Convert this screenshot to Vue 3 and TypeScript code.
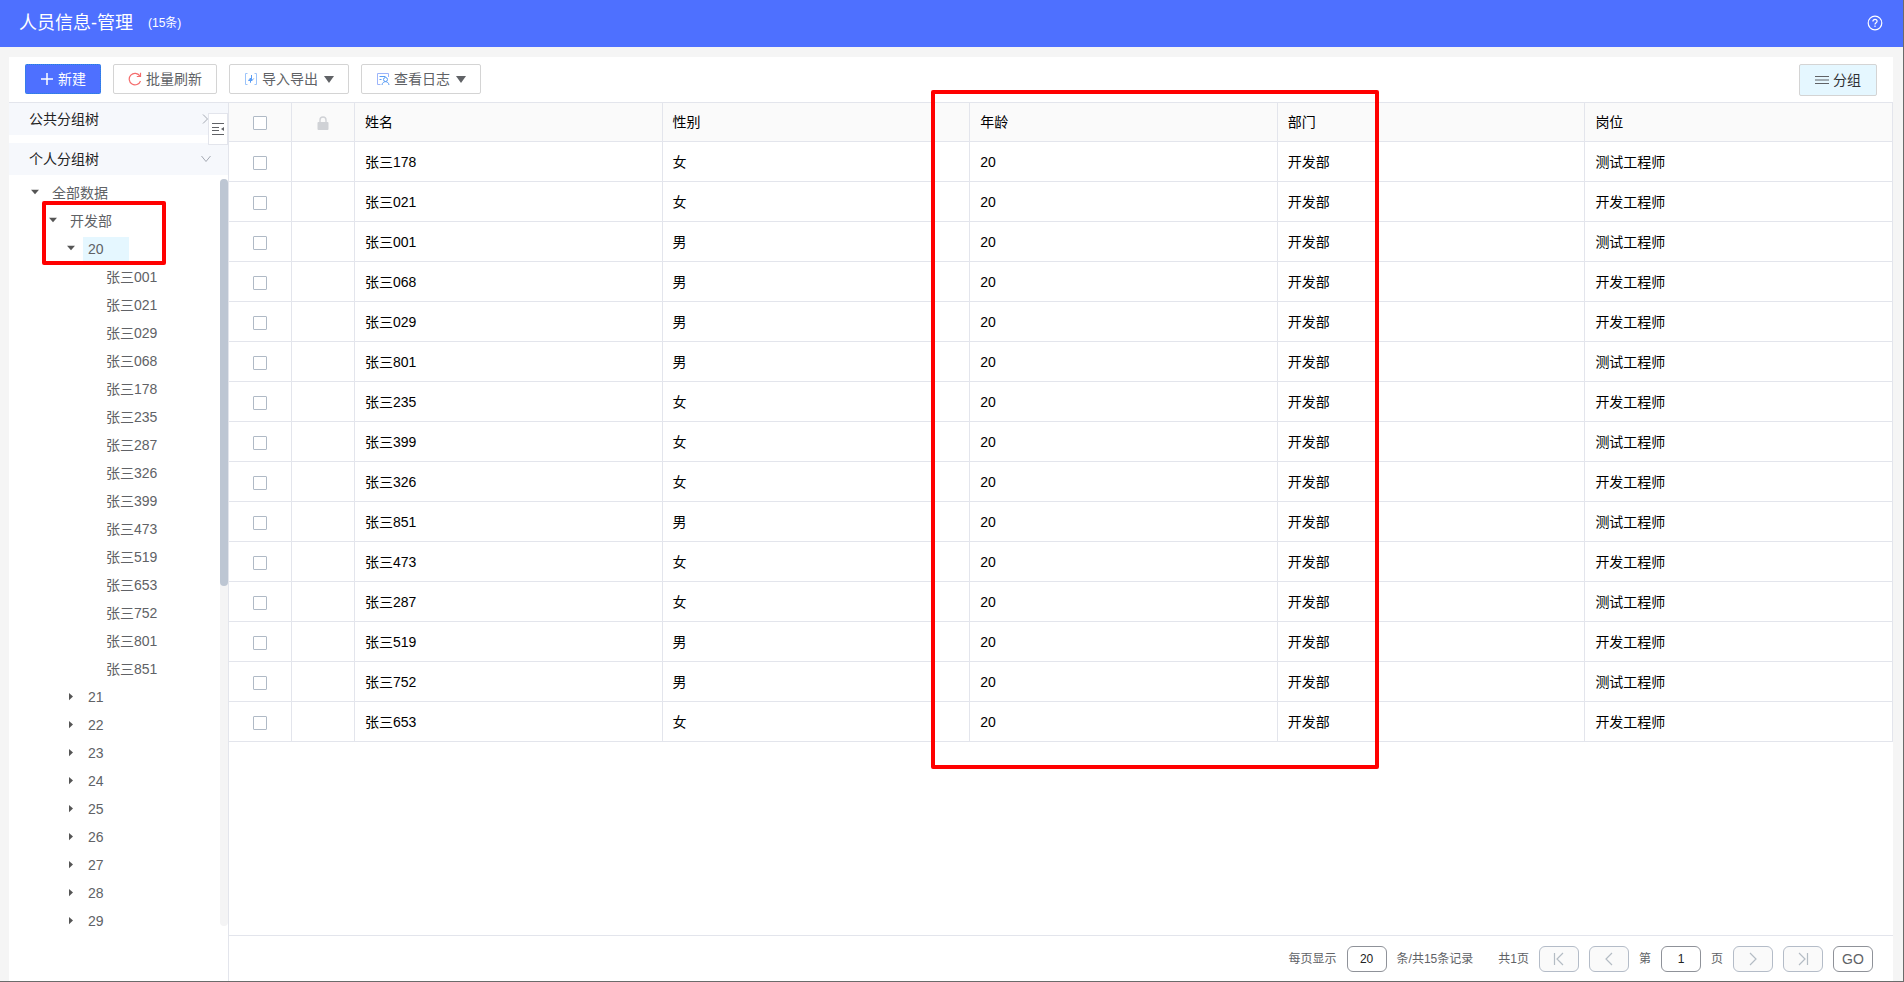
<script setup lang="ts">
import { ref } from 'vue'

interface Person {
  name: string
  gender: string
  age: number
  dept: string
  post: string
}

const TESTER = '测试工程师'
const DEVELOPER = '开发工程师'

const source: [string, string, string][] = [
  ['178', '女', TESTER],
  ['021', '女', DEVELOPER],
  ['001', '男', TESTER],
  ['068', '男', DEVELOPER],
  ['029', '男', DEVELOPER],
  ['801', '男', TESTER],
  ['235', '女', DEVELOPER],
  ['399', '女', TESTER],
  ['326', '女', DEVELOPER],
  ['851', '男', TESTER],
  ['473', '女', DEVELOPER],
  ['287', '女', TESTER],
  ['519', '男', DEVELOPER],
  ['752', '男', TESTER],
  ['653', '女', DEVELOPER],
]

const people: Person[] = source.map(([no, gender, post]) => ({
  name: `张三${no}`,
  gender,
  age: 20,
  dept: '开发部',
  post,
}))

const members = people.map((p) => p.name).sort()
const ages = [21, 22, 23, 24, 25, 26, 27, 28, 29]
const columns = ['姓名', '性别', '年龄', '部门', '岗位']

const selected = ref<string[]>([])
const pageSize = ref('20')
const pageNo = ref('1')

function toggleAll(e: Event) {
  selected.value = (e.target as HTMLInputElement).checked ? [...members] : []
}
</script>

<template>
  <div class="page">
    <header class="topbar">
      <h1>人员信息-管理</h1>
      <span class="count">(15条)</span>
      <button class="help" type="button" aria-label="帮助">
        <svg width="16" height="16" viewBox="0 0 16 16" fill="none" stroke="#fff" stroke-width="1.2">
          <circle cx="8" cy="8" r="6.8" />
          <path d="M5.9 6.4c0-1.3.9-2.1 2.1-2.1s2.1.8 2.1 1.9c0 1.5-2.100 1.500-2.100 3.200" />
          <path d="M8 10.500v1.400" />
        </svg>
      </button>
    </header>

    <main class="panel">
      <div class="toolbar">
        <button class="btn primary" type="button">
          <svg width="14" height="14" viewBox="0 0 14 14" stroke="#fff" stroke-width="1.5"><path d="M7 1v12M1 7h12" /></svg>
          新建
        </button>
        <button class="btn" type="button">
          <svg width="14" height="14" viewBox="0 0 14 14" fill="none" stroke="#f56c6c" stroke-width="1.2">
            <path d="M12.500 9A5.800 5.800 0 1 1 11.800 3.800" />
            <path d="M12.500 .8v3.700H8.800" />
          </svg>
          批量刷新
        </button>
        <button class="btn" type="button">
          <svg width="14" height="14" viewBox="0 0 14 14" fill="none" stroke="#5a9df5">
            <path d="M3.500 1.500h-2v11h2M10.500 1.500h2v11h-2" stroke="#9cc4fa" />
            <path d="M6.500 10.500V6L4.500 8.500h2v2zM7.500 3v6l2.200-2.500" />
          </svg>
          导入导出
          <span class="caret"></span>
        </button>
        <button class="btn" type="button">
          <svg width="14" height="14" viewBox="0 0 14 14" fill="none" stroke="#5a9df5">
            <path d="M4.500 12.500h-3v-11h11V5" stroke="#9cb4fa" />
            <path d="M3.500 4.500h6M3.500 7.500h2" />
            <circle cx="9.500" cy="7.500" r="2" />
            <path d="M6 13c.3-2.200 1.700-3.300 3.500-3.300s3.200 1.100 3.500 3.300" />
          </svg>
          查看日志
          <span class="caret"></span>
        </button>
        <button class="btn group" type="button">
          <svg width="14" height="10" viewBox="0 0 14 10" stroke="#606266" stroke-width="1.2"><path d="M0 1.500h14M0 5h14M0 8.500h14" /></svg>
          分组
        </button>
      </div>

      <div class="content">
        <aside class="sidebar">
          <button class="section" type="button">
            公共分组树
            <svg width="10" height="10" viewBox="0 0 10 10" fill="none" stroke="#a4a9b2"><path d="M2 .5L6.500 5 2 9.500" /></svg>
          </button>
          <button class="section" type="button">
            个人分组树
            <svg width="10" height="10" viewBox="0 0 10 10" fill="none" stroke="#a4a9b2"><path d="M.5 2L5 7.500 9.500 2" /></svg>
          </button>
          <button class="collapse" type="button" aria-label="收起">
            <svg width="13" height="14" viewBox="0 0 13 14" stroke="#606266" fill="#606266">
              <path d="M0 1.500h12M0 5.500h7M0 8.500h7M0 12.500h12" />
              <path d="M12 5v4L9 7z" stroke="none" />
            </svg>
          </button>

          <div class="tree-box">
            <ul class="tree">
              <li class="l1"><i class="tri down"></i><span>全部数据</span></li>
              <li class="l2"><i class="tri down"></i><span>开发部</span></li>
              <li class="l3"><i class="tri down"></i><span class="active">20</span></li>
              <li v-for="m in members" :key="m" class="l4"><i class="tri"></i><span>{{ m }}</span></li>
              <li v-for="a in ages" :key="a" class="l3"><i class="tri right"></i><span>{{ a }}</span></li>
            </ul>
            <div class="scroll"><div class="thumb"></div></div>
          </div>
          <div class="mark mark-tree"></div>
        </aside>

        <section class="main">
          <table>
            <colgroup>
              <col class="narrow" /><col class="narrow" />
              <col v-for="c in columns" :key="c" />
            </colgroup>
            <thead>
              <tr>
                <th class="mid">
                  <input type="checkbox" aria-label="全选" :checked="selected.length === people.length" @change="toggleAll" />
                </th>
                <th class="mid">
                  <svg width="12" height="14" viewBox="0 0 12 14" fill="none">
                    <path d="M3 7V4a3 3 0 0 1 6 0v3" stroke="#d0d2d6" stroke-width="1.4" />
                    <rect x=".5" y="6" width="11" height="8" rx="1" fill="#d0d2d6" />
                  </svg>
                </th>
                <th v-for="c in columns" :key="c">{{ c }}</th>
              </tr>
            </thead>
            <tbody>
              <tr v-for="p in people" :key="p.name">
                <td class="mid"><input v-model="selected" type="checkbox" :value="p.name" :aria-label="p.name" /></td>
                <td></td>
                <td>{{ p.name }}</td>
                <td>{{ p.gender }}</td>
                <td>{{ p.age }}</td>
                <td>{{ p.dept }}</td>
                <td>{{ p.post }}</td>
              </tr>
            </tbody>
          </table>
          <div class="mark mark-cols"></div>

          <footer class="pager">
            <label for="size">每页显示</label>
            <input id="size" v-model="pageSize" type="text" />
            <span class="total">条/共15条记录</span>
            <span>共1页</span>
            <button type="button" disabled aria-label="首页">
              <svg width="12" height="14" viewBox="0 0 12 14"><path d="M1.500 1v12M10 1L4 7l6 6" /></svg>
            </button>
            <button type="button" disabled aria-label="上一页">
              <svg width="12" height="14" viewBox="0 0 12 14"><path d="M9 1L3 7l6 6" /></svg>
            </button>
            <label for="no">第</label>
            <input id="no" v-model="pageNo" type="text" />
            <span>页</span>
            <button type="button" disabled aria-label="下一页">
              <svg width="12" height="14" viewBox="0 0 12 14"><path d="M3 1l6 6-6 6" /></svg>
            </button>
            <button type="button" disabled aria-label="末页">
              <svg width="12" height="14" viewBox="0 0 12 14"><path d="M2 1l6 6-6 6M10.500 1v12" /></svg>
            </button>
            <button class="go" type="button">GO</button>
          </footer>
        </section>
      </div>
    </main>
  </div>
</template>

<style>
body {
  margin: 0;
}
</style>

<style scoped>
* {
  box-sizing: border-box;
}
.page {
  display: flex;
  flex-direction: column;
  min-height: 100vh;
  background: #f5f5f5;
  border-right: 1px solid #6b6b6b;
  border-bottom: 1px solid #6b6b6b;
  font: 14px/20px "Liberation Sans", "Noto Sans CJK SC", sans-serif;
  color: #606266;
}
button,
input {
  font: inherit;
  color: inherit;
}
button {
  padding: 0;
  cursor: pointer;
}
svg {
  flex: none;
}
.topbar {
  display: flex;
  align-items: center;
  height: 47px;
  padding: 0 20px 2px 19px;
  background: #4e70ff;
  color: #fff;
}
h1 {
  margin: 0;
  font-size: 18px;
  line-height: 24px;
  font-weight: 400;
}
.count {
  margin-left: 15px;
  font-size: 12px;
}
.help {
  display: flex;
  margin-left: auto;
  border: 0;
  background: none;
}
.panel {
  flex: 1;
  display: flex;
  flex-direction: column;
  margin: 10px 10px 0 9px;
  background: #fff;
}
.toolbar {
  display: flex;
  align-items: flex-start;
  gap: 12px;
  height: 46px;
  padding: 7px 16px 0;
  border-bottom: 1px solid #e3e5ec;
}
.btn {
  display: flex;
  align-items: center;
  gap: 4px;
  height: 30px;
  padding: 0 14px;
  border: 1px solid #d4d4d4;
  border-radius: 2px;
  background: #fff;
}
.primary {
  border: 1px dotted #1e88d8;
  background: #4e70ff;
  color: #fff;
}
.group {
  height: 32px;
  margin-left: auto;
  padding: 0 15px;
  background: #e5f7ff;
  color: #303133;
}
.caret {
  border: 5px solid transparent;
  border-top: 7px solid #606266;
  border-bottom: 0;
  margin-left: 2px;
}
.content {
  flex: 1;
  display: flex;
}
.sidebar {
  position: relative;
  display: flex;
  flex-direction: column;
  width: 220px;
  border-right: 1px solid #e3e5ec;
}
.section {
  display: flex;
  align-items: center;
  justify-content: space-between;
  height: 32px;
  margin-bottom: 8px;
  padding: 0 17px 0 20px;
  border: 0;
  background: #f6f8fc;
  color: #222;
}
.collapse {
  position: absolute;
  top: 10px;
  right: 0;
  display: flex;
  align-items: center;
  justify-content: center;
  width: 20px;
  height: 32px;
  border: 1px solid #e3e5ec;
  background: #fff;
}
.tree-box {
  display: flex;
  flex: 1;
  margin-top: -4px;
}
.tree {
  flex: 1;
  margin: 0;
  padding: 0;
  list-style: none;
}
.tree li {
  display: flex;
  align-items: center;
  height: 28px;
}
.tree span {
  padding: 0 5px;
  line-height: 24px;
}
.tree .active {
  width: 46px;
  background: #e5f7ff;
}
.l1 {
  padding-left: 22px;
}
.l2 {
  padding-left: 40px;
}
.l3 {
  padding-left: 58px;
}
.l4 {
  padding-left: 76px;
}
.tri {
  width: 8px;
  height: 8px;
  margin-right: 8px;
}
.down {
  background: #555;
  clip-path: polygon(0 10%, 100% 10%, 50% 65%);
}
.right {
  background: #555;
  clip-path: polygon(25% 0, 75% 45%, 25% 90%);
}
.scroll {
  width: 8px;
  height: 747px;
  border-radius: 4px;
  background: #f4f4f5;
}
.thumb {
  height: 407px;
  border-radius: 4px;
  background: #bdc6d3;
}
.mark {
  position: absolute;
  border: 4px solid #f00;
  border-radius: 2px;
  pointer-events: none;
}
.mark-tree {
  top: 98px;
  left: 33px;
  width: 124px;
  height: 64px;
}
.mark-cols {
  top: -13px;
  left: 702px;
  width: 448px;
  height: 679px;
}
.main {
  position: relative;
  flex: 1;
  display: flex;
  flex-direction: column;
}
table {
  width: 100%;
  table-layout: fixed;
  border-collapse: separate;
  border-spacing: 0;
  color: #000;
}
.narrow {
  width: 63px;
}
th,
td {
  height: 40px;
  padding: 0 10px;
  border-right: 1px solid #e3e5ec;
  border-bottom: 1px solid #e3e5ec;
  font-weight: 400;
  text-align: left;
}
th {
  height: 39px;
  background: #fafafa;
}
.mid {
  padding-top: 2px;
  text-align: center;
}
.mid > * {
  display: block;
  margin: 0 auto;
}
input[type='checkbox'] {
  appearance: none;
  width: 14px;
  height: 14px;
  border: 1px solid #b0bac6;
  border-radius: 1px;
  background: #fff;
}
input[type='checkbox']:checked {
  background: #4e70ff;
}
.pager {
  display: flex;
  align-items: center;
  justify-content: flex-end;
  gap: 10px;
  height: 46px;
  margin-top: auto;
  padding: 0 20px;
  border-top: 1px solid #e3e5ec;
  font-size: 12px;
}
.total {
  margin-right: 15px;
}
.pager input,
.pager button {
  display: flex;
  align-items: center;
  justify-content: center;
  width: 40px;
  height: 26px;
  padding: 0;
  border: 1px solid #8f9299;
  border-radius: 6px;
  background: #fff;
  text-align: center;
}
.pager input {
  color: #222;
}
.pager button:disabled {
  border-color: #b4bcc8;
  background: #fafafa;
}
.pager svg {
  fill: none;
  stroke: #b4bcc4;
  stroke-width: 1.2;
}
.pager .go {
  font-size: 14px;
}
</style>
